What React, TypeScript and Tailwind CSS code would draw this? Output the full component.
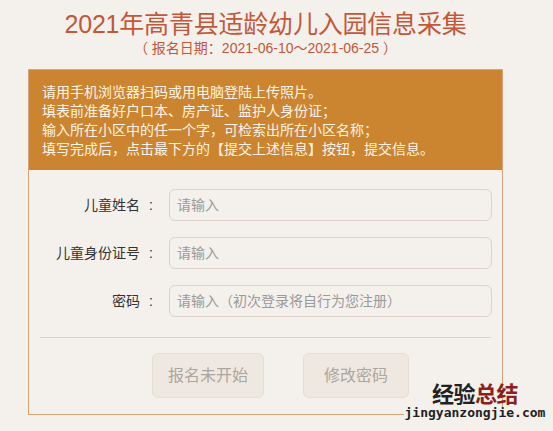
import React from "react";

const font = { fontFamily: '"Liberation Sans", "Noto Sans CJK SC", sans-serif' };

function Row({ label, placeholder }: { label: string; placeholder: string }) {
  return (
    <div className="flex items-center h-[32px]">
      <div className="w-[111px] text-right text-[14px] text-[#333] whitespace-nowrap">{label}</div>
      <div className="w-[22px] text-center text-[14px] text-[#333]">:</div>
      <div className="ml-[7px] w-[323px] h-[32px] rounded-[6px] border border-[#ddd3ca] bg-[#f4f0eb] flex items-center pl-[7px] text-[14px] text-[#9a9a9a] whitespace-nowrap">
        {placeholder}
      </div>
    </div>
  );
}

export default function App() {
  return (
    <div className="w-[553px] h-[431px] bg-[#f4f0eb] overflow-hidden relative" style={font}>
      <div className="ml-[28px] w-[475px]">
        <div className="pt-[9px] h-[39px] text-center text-[25px] leading-[30px] text-[#c2583a] whitespace-nowrap tracking-[-0.2px]">
          2021年高青县适龄幼儿入园信息采集
        </div>
        <div className="pt-[1px] h-[30px] text-center text-[14px] leading-[16px] text-[#c2583a] whitespace-nowrap">
          （ 报名日期：2021-06-10～2021-06-25 ）
        </div>
        <div className="border border-[#d9a278]">
          <div className="bg-[#cb8530] px-[13px] pt-[13px] pb-[11px] text-[14px] leading-[19px] text-[#fdf3e6] whitespace-nowrap">
            <div>请用手机浏览器扫码或用电脑登陆上传照片。</div>
            <div>填表前准备好户口本、房产证、监护人身份证；</div>
            <div>输入所在小区中的任一个字，可检索出所在小区名称；</div>
            <div>填写完成后，点击最下方的【提交上述信息】按钮，提交信息。</div>
          </div>
          <div className="pt-[19px] flex flex-col gap-[16px]">
            <Row label="儿童姓名" placeholder="请输入" />
            <Row label="儿童身份证号" placeholder="请输入" />
            <Row label="密码" placeholder="请输入（初次登录将自行为您注册）" />
          </div>
          <div className="mx-[11px] mt-[20px] border-t border-[#ddd2c8]" />
          <div className="flex pt-[15px] pb-[16px] pl-[123px] gap-[39px]">
            <div className="w-[112px] h-[45px] rounded-[6px] border border-[#e8ddd3] bg-[#efe8e1] flex items-center justify-center text-[16px] text-[#aca6a0]">
              报名未开始
            </div>
            <div className="w-[106px] h-[45px] rounded-[6px] border border-[#e8ddd3] bg-[#efe8e1] flex items-center justify-center text-[16px] text-[#aca6a0]">
              修改密码
            </div>
          </div>
        </div>
      </div>
      <div className="absolute left-[401px] top-[381px] w-[148px] flex flex-col items-center">
        <div className="text-[22px] leading-[23px] font-bold tracking-[-0.5px]" style={{ fontFamily: '"Noto Sans CJK SC", sans-serif' }}>
          <span className="text-[#222]">经验</span>
          <span className="text-[#8c1f1f]">总结</span>
        </div>
        <div className="mt-[3px] bg-[#f4f0eb] px-[1px] text-[13px] leading-[11px] font-bold text-[#222]" style={{ fontFamily: '"DejaVu Sans Mono", monospace' }}>
          jingyanzongjie.com
        </div>
      </div>
    </div>
  );
}
